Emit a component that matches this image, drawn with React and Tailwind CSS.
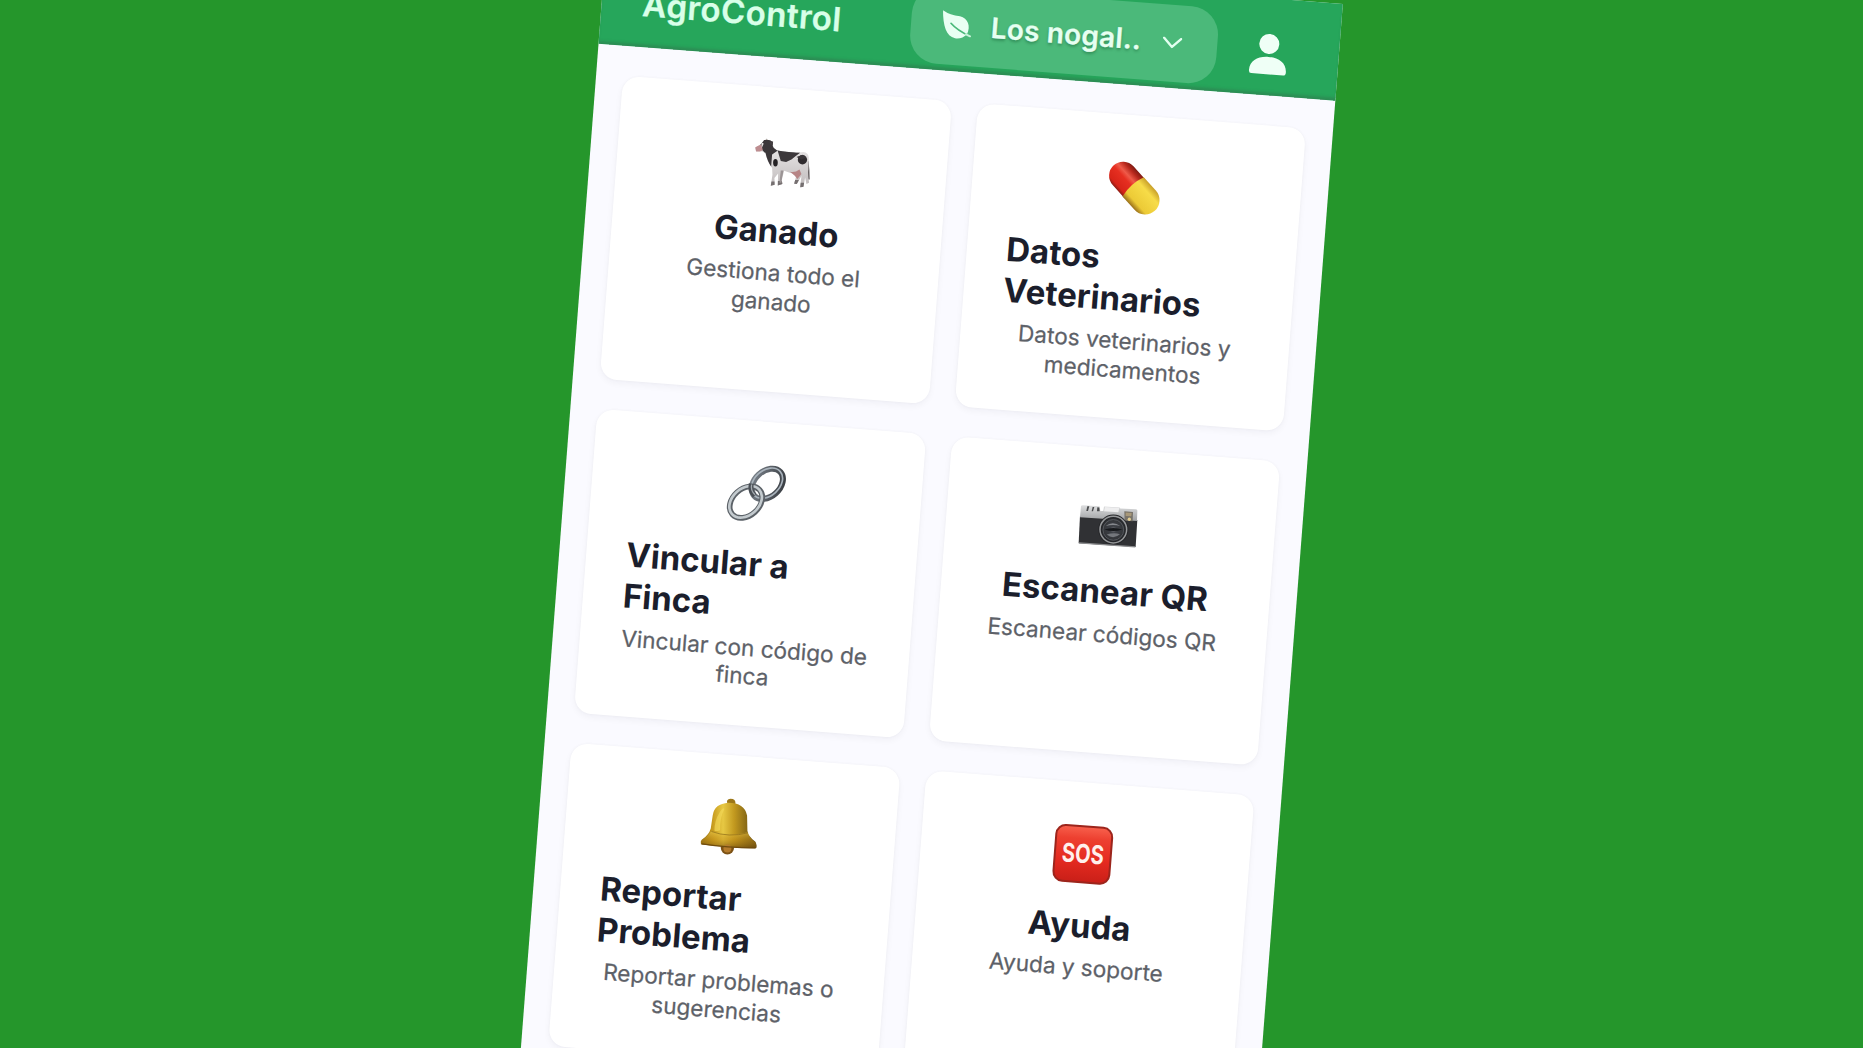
import React from "react";

function IconFrame({ dx = 0, dy = 0, children }) {
  return (
    <svg viewBox="0 0 270 240" className="h-[80px] w-[90px] shrink-0 overflow-visible" aria-hidden="true">
      <g transform={`translate(${dx} ${dy}) rotate(-4.42 135 120)`}>{children}</g>
    </svg>
  );
}

function CowIcon() {
  return (
    <IconFrame dx={9} dy={5}>
      <defs>
        <linearGradient id="cowBody" x1="0" y1="0" x2="0" y2="1">
          <stop offset="0" stopColor="#f3f1f1" />
          <stop offset="1" stopColor="#bdb8b9" />
        </linearGradient>
        <clipPath id="cowClip">
          <path d="M72 60 Q88 56 98 66 L98 78 Q106 92 122 93 Q160 99 190 96 Q205 98 206 112 L205 148 Q203 160 207 188 L199 192 L195 172 L190 200 L180 202 L184 168 L170 192 L162 191 L170 162 Q150 160 132 152 L125 180 L127 192 L113 196 L114 160 L103 174 L104 194 L92 197 L97 164 L96 144 Q82 126 76 98 L62 94 L48 94 L45 82 L63 72 Z" />
        </clipPath>
      </defs>
      <path d="M203 124 Q206 150 206 178" stroke="#4c4647" strokeWidth="5" fill="none" />
      <g clipPath="url(#cowClip)">
        <rect x="40" y="50" width="180" height="160" fill="url(#cowBody)" />
        <path d="M112 90 L180 98 L167 108 L154 118 L138 126 L122 123 Z" fill="#3d393c" />
        <path d="M60 58 H100 V82 L112 92 L96 103 L93 140 Q74 118 72 96 L61 84Z" fill="#3b373a" />
        <ellipse cx="187" cy="119" rx="14" ry="14" fill="#302c2f" />
        <path d="M169 111 L187 104 L198 112 L184 118Z" fill="#3b373a" />
        <path d="M44 78 L64 74 L68 90 L56 98 L44 94Z" fill="#bd8d90" />
        <path d="M64 67 L71 70 L65 84Z" fill="#e5e2e2" />
        <path d="M90 184 H104 V199 H90Z M111 183 H128 V198 H111Z M162 180 H176 V198 H162Z M180 188 H192 V204 H180Z" fill="#756f70" />
        <path d="M122 151 L130 151 L124 188 L118 188Z" fill="#9b9495" />
      </g>
      <ellipse cx="106" cy="128" rx="7" ry="11" fill="#242124" />
      <path d="M150 155 Q165 158 178 148 L184 162 L172 177 L164 167Z" fill="#b78586" />
      <path d="M76 60 L80 55 L83 60Z" fill="#aaa49f" />
      <path d="M88 65 L99 64 L98 74 L90 73Z" fill="#443f42" />
    </IconFrame>
  );
}

function PillIcon() {
  return (
    <IconFrame dx={-4} dy={0}>
      <defs>
        <linearGradient id="pillRed" x1="0" y1="0" x2="0" y2="1">
          <stop offset="0" stopColor="#7e1b13" />
          <stop offset="0.16" stopColor="#b8281c" />
          <stop offset="0.36" stopColor="#ef5a49" />
          <stop offset="0.52" stopColor="#e62f21" />
          <stop offset="0.88" stopColor="#d82418" />
          <stop offset="1" stopColor="#8d1c14" />
        </linearGradient>
        <linearGradient id="pillYellow" x1="0" y1="0" x2="0" y2="1">
          <stop offset="0" stopColor="#c9a02a" />
          <stop offset="0.25" stopColor="#f7dc48" />
          <stop offset="0.8" stopColor="#ecca36" />
          <stop offset="1" stopColor="#9a701a" />
        </linearGradient>
      </defs>
      <g transform="translate(132.500 127) rotate(48)">
        <path d="M4 -42 H-49 A42 42 0 0 0 -49 42 H4Z" fill="url(#pillRed)" />
        <path d="M-4 -43 H50 A43 43 0 0 1 50 43 H-4 Q-17 0 -4 -43Z" fill="url(#pillYellow)" />
      </g>
    </IconFrame>
  );
}

function LinkIcon() {
  return (
    <IconFrame dx={-3} dy={-5}>
      <defs>
        <linearGradient id="linkSteel" x1="0" y1="0" x2="1" y2="1">
          <stop offset="0" stopColor="#7f878f" />
          <stop offset="0.5" stopColor="#5b6168" />
          <stop offset="1" stopColor="#33373c" />
        </linearGradient>
      </defs>
      <g fill="none">
        <ellipse cx="170" cy="103" rx="53" ry="38" transform="rotate(-42 170 103)" stroke="url(#linkSteel)" strokeWidth="18" />
        <ellipse cx="169" cy="101" rx="53" ry="38" transform="rotate(-42 169 101)" stroke="#a9b3bc" strokeWidth="5" />
        <ellipse cx="106" cy="158" rx="55" ry="40" transform="rotate(-42 106 158)" stroke="#5c6268" strokeWidth="17" />
        <ellipse cx="105" cy="157" rx="55" ry="40" transform="rotate(-42 105 157)" stroke="#c3cace" strokeWidth="8" />
        <path d="M122 103 Q117 124 132 139" stroke="#4a4f55" strokeWidth="15" />
        <path d="M123 105 Q119 122 133 136" stroke="#a1a8ae" strokeWidth="4" />
      </g>
    </IconFrame>
  );
}

function CameraIcon() {
  return (
    <IconFrame dx={0} dy={18}>
      <defs>
        <linearGradient id="cameraTop" x1="0" y1="0" x2="0" y2="1">
          <stop offset="0" stopColor="#dedfe0" />
          <stop offset="1" stopColor="#9fa1a3" />
        </linearGradient>
        <radialGradient id="cameraLens">
          <stop offset="0" stopColor="#77797d" />
          <stop offset="0.25" stopColor="#3d4046" />
          <stop offset="0.7" stopColor="#35373b" />
          <stop offset="1" stopColor="#1d1e21" />
        </radialGradient>
      </defs>
      <path d="M45 94 L217 106 L212 187 L41 176Z" fill="#303134" />
      <path d="M48 65 Q48 62 54 62 L104 65 L106 79 L115 79 L117 66 L164 69 L166 72 L213 74 Q218 75 217 80 L216 109 L45 98Z" fill="url(#cameraTop)" />
      <path d="M120 67 L163 70 L160 83 L117 80Z" fill="#eeeeef" />
      <g fill="#4a4b4d">
        <path d="M67 65 L73 65 L69 79 L64 79Z" />
        <path d="M83 67 L88 67 L84 80 L80 80Z" />
        <path d="M97 68 L103 69 L104 80 L96 80Z" />
      </g>
      <path d="M178 80 L204 82 L203 110 L179 108Z" fill="#777268" />
      <path d="M182 84 L200 85 L199 95 L182 94Z" fill="#a89879" />
      <circle cx="193" cy="104" r="5" fill="#e2cd91" />
      <circle cx="145" cy="135" r="45" fill="#242528" />
      <circle cx="145" cy="135" r="40" fill="url(#cameraLens)" stroke="#96989a" strokeWidth="4.500" />
      <circle cx="145" cy="136" r="31" fill="none" stroke="#55585d" strokeWidth="3" />
      <path d="M122 124 Q143 108 166 124 Q144 119 122 124Z" fill="#85888d" />
      <path d="M118 135 Q145 125 172 135 Q145 144 118 135Z" fill="#17191c" />
      <path d="M125 150 Q147 143 165 149 Q145 166 125 150Z" fill="#74777c" />
      <path d="M42 175 L211 187" stroke="#8b8c8e" strokeWidth="4" />
    </IconFrame>
  );
}

function BellIcon() {
  return (
    <IconFrame dx={-2} dy={-2}>
      <defs>
        <linearGradient id="bellGold" x1="0" y1="0" x2="1" y2="0">
          <stop offset="0" stopColor="#8a6813" />
          <stop offset="0.22" stopColor="#c99d20" />
          <stop offset="0.4" stopColor="#e7c843" />
          <stop offset="0.6" stopColor="#c2991f" />
          <stop offset="0.8" stopColor="#8e6e17" />
          <stop offset="1" stopColor="#614813" />
        </linearGradient>
        <linearGradient id="bellRim" x1="0" y1="0" x2="0" y2="1">
          <stop offset="0" stopColor="#edcb4a" />
          <stop offset="0.5" stopColor="#c18d18" stopOpacity="0.7" />
          <stop offset="1" stopColor="#714d0c" />
        </linearGradient>
      </defs>
      <path d="M127 57 Q122 45 136 43 Q153 43 151 59Z" fill="#9c7719" />
      <circle cx="127" cy="190" r="20" fill="#7c5215" />
      <path d="M83 92 Q88 58 130 55 Q178 55 186 93 L187 139 Q189 156 211 172 Q217 184 213 191 Q175 193 128 187 Q78 184 48 179 Q45 171 50 166 Q72 151 77 132Z" fill="url(#bellGold)" />
      <path d="M78 140 Q130 158 188 143 Q192 160 212 174 L214 190 Q130 190 47 179 L49 167 Q72 153 78 140Z" fill="url(#bellRim)" opacity="0.65" />
      <path d="M104 83 Q114 67 118 73 Q104 102 105 137 Q92 142 88 138 Q88 108 104 83Z" fill="#f2d859" opacity="0.65" />
      <path d="M79 141 Q131 160 189 145" fill="none" stroke="#806013" strokeWidth="3" opacity="0.6" />
      <circle cx="127" cy="192" r="12" fill="#b47b2c" />
      <path d="M50 178 Q128 190 211 190" fill="none" stroke="#6f4b0e" strokeWidth="4" />
    </IconFrame>
  );
}

function SosIcon() {
  return (
    <IconFrame dx={2} dy={6}>
      <defs>
        <linearGradient id="sosRed" x1="0" y1="0" x2="0" y2="1">
          <stop offset="0" stopColor="#f8614d" />
          <stop offset="0.22" stopColor="#ed4030" />
          <stop offset="0.6" stopColor="#e52b20" />
          <stop offset="1" stopColor="#c91f18" />
        </linearGradient>
      </defs>
      <g transform="rotate(4.42 128 119)">
        <rect x="44" y="35" width="168" height="168" rx="28" fill="url(#sosRed)" stroke="#9c251c" strokeWidth="6" />
        <text
          x="128"
          y="145"
          textAnchor="middle"
          textLength="126"
          lengthAdjust="spacingAndGlyphs"
          fill="#fff0ec"
          fontSize="78"
          className="font-['Inter',sans-serif] font-bold"
        >
          SOS
        </text>
      </g>
    </IconFrame>
  );
}

const cards = [
  { icon: CowIcon, title: "Ganado", text: "Gestiona todo el\nganado" },
  { icon: PillIcon, title: "Datos\nVeterinarios", text: "Datos veterinarios y\nmedicamentos" },
  { icon: LinkIcon, title: "Vincular a\nFinca", text: "Vincular con código de\nfinca" },
  { icon: CameraIcon, title: "Escanear QR", text: "Escanear códigos QR" },
  { icon: BellIcon, title: "Reportar\nProblema", text: "Reportar problemas o\nsugerencias" },
  { icon: SosIcon, title: "Ayuda", text: "Ayuda y soporte" },
];

function Card({ icon: Icon, title, text }) {
  const wrapped = title.includes("\n");
  return (
    <article className="flex h-[304.5px] flex-col items-center rounded-[17px] bg-white px-[40px] pt-[30px] shadow-[0_3px_7px_rgba(20,20,50,0.045),0_0_3px_rgba(20,20,50,0.035)]">
      <Icon />
      <h2
        className={
          "mt-[13px] whitespace-pre text-[33px] leading-[41px] font-bold tracking-[0.05px] text-[#1b1e2c] " +
          (wrapped ? "w-full text-left" : "text-center")
        }
      >
        {title}
      </h2>
      <p className="mt-[7.5px] whitespace-pre text-center text-[22.6px] leading-[28.5px] text-[#5d6168] [-webkit-text-stroke:0.25px_#5d6168]">
        {text}
      </p>
    </article>
  );
}

function Header() {
  return (
    <header className="flex h-[97px] items-start bg-[#26a65b] pl-[41px] shadow-[inset_0_-4px_3px_-1px_rgba(50,110,75,0.45)]">
      <h1 className="mt-[34px] w-[269px] text-[33px] leading-[40px] font-semibold tracking-[0.5px] text-[#d8ffe8] [-webkit-text-stroke:0.3px_#d8ffe8]">
        AgroControl
      </h1>
      <div className="mt-[14px] flex h-[77px] w-[307px] items-center rounded-[28px] bg-[#4bb97a] pb-[4px] pl-[31px]">
        <svg viewBox="0 0 30 30" className="h-[30px] w-[30px]" aria-hidden="true">
          <g transform="rotate(-4.42 15 15)">
            <path d="M1 0 Q8 5 18 6 C26 8 29 16 25 24 Q20 29 13 28 C4 26 1 15 1 0Z" fill="#e9fff3" />
            <path d="M9 13 Q15 20 28 26" fill="none" stroke="#4bb97a" strokeWidth="1.700" strokeLinecap="round" />
            <path d="M24 24 L28 26" stroke="#c8f3da" strokeWidth="2" strokeLinecap="round" />
          </g>
        </svg>
        <span className="ml-[19px] w-[153px] whitespace-nowrap text-[28px] leading-[34px] font-semibold tracking-[0.25px] text-[#e6fff1] [text-shadow:0_2px_3px_rgba(0,60,25,0.35)] [-webkit-text-stroke:0.3px_#e6fff1]">
          Los nogal..
        </span>
        <svg viewBox="0 0 20 12" className="mt-[3px] ml-[19px] h-[12px] w-[20px]" aria-hidden="true">
          <path d="M1.500 1.500 L10 10 L18.500 1.500" fill="none" stroke="#e2fff0" strokeWidth="2.400" strokeLinecap="round" strokeLinejoin="round" />
        </svg>
      </div>
      <svg viewBox="0 0 38 42" className="mt-[35px] ml-[33px] h-[42px] w-[38px]" aria-hidden="true">
        <circle cx="18.800" cy="10.500" r="10" fill="#effff6" />
        <path d="M0.500 38 C0.500 28 9 23.500 19 23.500 C29 23.500 37.500 28 37.500 38 Q37.500 41 35 41 H3 Q0.500 41 0.500 38Z" fill="#effff6" />
      </svg>
    </header>
  );
}

export default function App() {
  return (
    <div className="flex h-[1048px] w-full items-start overflow-hidden bg-[#25962b] font-['Inter',sans-serif]">
      <main className="mt-[-53px] ml-[606px] w-[739px] shrink-0 origin-top-left rotate-[4.42deg] bg-[#fafaff]">
        <Header />
        <section className="grid grid-cols-2 gap-x-[26px] gap-y-[30px] px-[27px] pt-[29.5px] pb-[150px]">
          {cards.map((card) => (
            <Card key={card.title} {...card} />
          ))}
        </section>
      </main>
    </div>
  );
}
